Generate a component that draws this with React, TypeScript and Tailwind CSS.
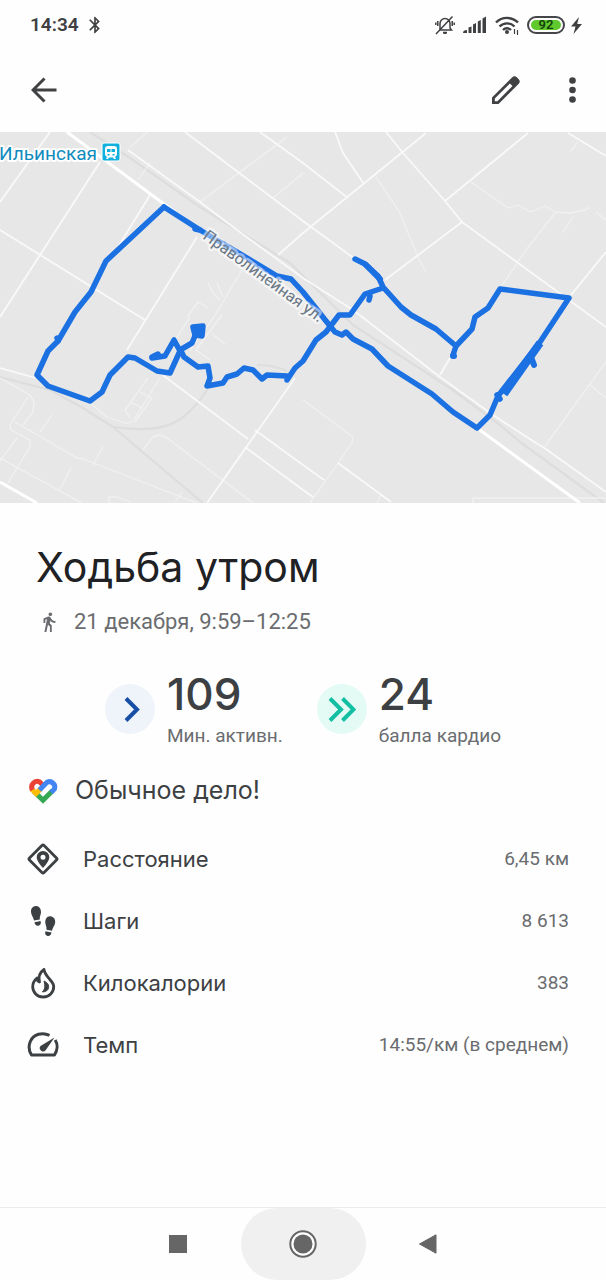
import type { ReactNode } from 'react';
import { MdDirectionsWalk, MdBluetooth } from 'react-icons/md';

const roads = [
  'M128 150 200 202 237 230 303 278 353 310 440 377 493 415 536 443 543 447 606 492',
  'M185 132 303 221 355 259',
  'M260 132 303 163 348 198',
  'M50 132 0 202',
  'M100 162 0 317',
  'M150 195 118 247',
  'M0 230 145 320',
  'M197 237 127 350',
  'M426 133 303 233 278 255',
  'M335 132 343 153 364 184',
  'M386 132 403 153 445 201 462 222 606 327',
  'M528 133 445 201',
  'M462 222 385 280',
  'M568 133 606 156',
  'M606 252 571 295',
  'M450 358 440 375',
  'M295 378 207 503',
  'M160 373 248 439',
  'M255 430 303 465 324 480',
  'M245 447 303 490 313 497',
  'M338 463 391 502',
  'M0 368 36 378',
];

const lanes = [
  'M150 130 130 147',
  'M287 137 200 202',
  'M303 173 273 198',
  'M150 163 138 180',
  'M242 270 214 317 190 350',
  'M217 283 223 297M208 283 213 293 220 300M187 317 198 302 208 308',
  'M376 177 400 213 418 257 426 272',
  'M471 182 508 208 518 205 531 212 545 206 555 212 570 213 585 210 590 207',
  'M555 213 526 250 501 287',
  'M573 217 562 233M578 142 571 151M596 212 606 220',
  'M606 362 545 446M590 385 606 398',
  'M303 400 353 437 352 443 310 503',
  'M381 495 377 503M473 503V498H606',
  'M143 450 152 438Q158 432 167 438L253 503',
  'M90 403 107 417 125 423Q131 424 135 418L160 378',
  'M0 378 30 395 34 402 33 412 23 425',
  'M28 397 10 425 11 430 30 440 30 447 8 483M17 438 0 461',
  'M15 422 77 458 83 459 197 503',
  'M0 458 82 503',
  'M52 415 40 432M103 447 93 465M71 468 59 491',
  'M109 503V497L117 497 130 502M182 492 175 502',
  'M148 378 125 410 130 418M140 392 152 398 135 422M130 402 143 408',
  'M190 317 172 345M222 315 196 350 210 360M212 334 225 344M182 358 196 368',
];

const rails = [
  'M90 132 130 158 200 207 290 263 353 325 453 390 500 425 520 442 604 503',
  'M0 377 50 390 83 408 113 427 203 503',
  'M113 427Q160 434 182 418 196 407 207 390',
  'M257 365Q275 365 287 371',
];

const route = [
  'M164 207 106 261 91 292 75 312 58 341 48 351 37 375 48 386 90 401 102 392 110 375 128 357 135 358 157 371 170 373 180 351 174 340 165 356 152 358',
  'M180 350 192 343 197 331M181 351 184 357 198 367 208 366 210 378 207 386 223 383 227 377 237 374 244 368 253 370 262 379 267 375 287 376 287 380 295 368 303 361 316 340 326 332 339 315 350 315 365 294 383 288',
  'M164 207 200 230 237 252 277 276 291 279 303 292 330 326 335 332 342 335 346 332 353 339 372 349 388 366 432 394 453 412 477 428 490 415 498 396 540 342 569 298 500 289 488 308 475 317 472 329 456 346 453 355',
  'M355 259 365 264 378 276 383 287 401 307 411 315 436 329 456 346',
  'M58 341 57 338M195 229 200 230M369 300 370 296M152 357 158 354M497 395 500 399',
];

function RouteMap() {
  return (
    <svg viewBox="0 132 606 371" className="block w-full bg-[#e7e7e7]" role="img" aria-label="Маршрут">
      <g fill="none" strokeLinejoin="round">
        <g stroke="#dcdddc" strokeWidth="2.2">
          {rails.map((d) => (
            <path key={d} d={d} />
          ))}
        </g>
        <g stroke="#f1f1f1" strokeWidth="1.3">
          {lanes.map((d) => (
            <path key={d} d={d} />
          ))}
        </g>
        <g stroke="#f9f9f9" strokeWidth="1.8">
          {roads.map((d) => (
            <path key={d} d={d} />
          ))}
        </g>
        <path d="M67 132 164 204 200 230M477 428 580 503M0 482 37 503" stroke="#fff" strokeWidth="3" />
        <g stroke="#1b70e2" strokeWidth="5.5" strokeLinecap="round">
          {route.map((d) => (
            <path key={d} d={d} />
          ))}
          <path d="M193 327 203 326 202 336 195 335Z" fill="#1b70e2" />
          <path d="M540 343 504 394" strokeWidth="8" strokeLinecap="butt" />
          <path d="M531 357 534 365M366 265 380 279M453 356 454 356" strokeWidth="6" />
        </g>
      </g>

      <g
        fontFamily="Roboto, sans-serif"
        stroke="#fff"
        strokeLinejoin="round"
        paintOrder="stroke"
      >
        <text x="-1" y="160" fontSize="19" strokeWidth="4" fill="#0e8bbd">
          Ильинская
        </text>
        <text
          transform="translate(202 238) rotate(36)"
          fontSize="16"
          strokeWidth="5"
          strokeOpacity="0.5"
          fill="#6b7785"
        >
          Праволинейная ул.
        </text>
      </g>

      <rect x="102" y="143" width="18" height="18" rx="2" fill="#12b0dc" stroke="#fff" />
      <path
        d="M108 146h6q3 0 3 3v5q0 2-2 3l1 2h-2l-1-1.500h-4l-1 1.500h-2l1-2q-2-1-2-3v-5q0-3 3-3z"
        fill="#fff"
      />
      <path d="M107 149h3.500v3h-3.500zM111.500 149h3.500v3h-3.500zM107.500 154h2v1.500h-2zM112.500 154h2v1.500h-2z" fill="#12b0dc" />
    </svg>
  );
}

function StatusBar() {
  return (
    <div className="flex h-12 items-center justify-between pt-0.5 pr-6 pl-[30px] text-[#3f4042]">
      <div className="flex items-center gap-1.5">
        <span className="text-[19px] leading-6 font-semibold">14:34</span>
        <MdBluetooth className="size-5" />
      </div>
      <div className="flex items-center gap-2">
        <svg width="20" height="20" viewBox="0 0 20 20" fill="none" stroke="currentColor" strokeWidth="1.500">
          <path d="M5 14.500V8.500a5 5 0 0 1 10 0v4.500l1.500 2H4M1 19 17.500 1.500M8 17.500h4M2.800 6v5M.8 7.500v2.500M17.200 6v5M19.200 7.500v2.500" />
          <path d="M8.500 18h3" strokeWidth="2" />
        </svg>
        <svg width="24" height="18" viewBox="0 0 24 18" fill="currentColor">
          <path d="M0 17q0-3 4-3v3zM5.500 11.500l3-1V17h-3zM10 8.500l3-1.500V17h-3zM14.800 5.500l3-1.500v13h-3zM19.500 2.500 23 .5V17h-3.500z" />
        </svg>
        <svg width="24" height="19" viewBox="0 0 24 19" fill="none" stroke="currentColor" strokeWidth="2.400">
          <path d="M1 6.500a15.500 15.500 0 0 1 22 0M4.500 10.500a10.500 10.500 0 0 1 15 0M8 14a5.500 5.500 0 0 1 8 0" />
          <circle cx="12" cy="16" r="2" fill="currentColor" stroke="none" />
          <path d="M19.500 13v5M22.500 14v5" strokeWidth="1.200" />
        </svg>
        <div className="flex items-center gap-1.5">
          <span className="flex h-[18px] w-[38px] rounded-full border-2 border-[#45464a] p-0.5">
            <span className="flex flex-1 items-center justify-center rounded-full bg-[#5fc92e] text-[13px] leading-3 font-semibold text-[#17400c]">
              92
            </span>
          </span>
          <svg width="11" height="17" viewBox="0 0 11 17" fill="currentColor">
            <path d="M8 0 0 9.500h4.500L2.500 17 11 7H6.200z" />
          </svg>
        </div>
      </div>
    </div>
  );
}

function TopBar() {
  return (
    <header className="flex h-[84px] items-center justify-between pr-6 pl-7 text-[#404143]">
      <button type="button" aria-label="Назад" className="flex size-8 items-center justify-center">
        <svg width="26" height="26" viewBox="0 0 26 26" fill="none" stroke="currentColor" strokeWidth="3">
          <path d="M13.500 1.500 2 13l11.500 11.500M2 13h23.500" />
        </svg>
      </button>
      <div className="flex items-center gap-10">
        <button type="button" aria-label="Изменить" className="flex size-8 items-center justify-center">
          <svg width="30" height="30" viewBox="0 0 30 30" fill="currentColor" fillRule="evenodd">
            <path d="M1 29v-6.500L21 2.500q2.500-2.500 5 0l1.500 1.500q2.500 2.500 0 5L7.500 29zM3.800 26.200h2.600L21.500 11l-2.600-2.600L3.800 23.600z" />
          </svg>
        </button>
        <button type="button" aria-label="Ещё" className="flex h-8 w-5 items-center justify-center">
          <svg width="7" height="26" viewBox="0 0 7 26" fill="currentColor">
            <circle cx="3.500" cy="3.500" r="3.300" />
            <circle cx="3.500" cy="13" r="3.300" />
            <circle cx="3.500" cy="22.500" r="3.300" />
          </svg>
        </button>
      </div>
    </header>
  );
}

interface StatProps {
  icon: ReactNode;
  value: string;
  label: string;
}

function Stat({ icon, value, label }: StatProps) {
  return (
    <div className="flex items-center gap-3">
      {icon}
      <div>
        <p className="font-[Inter,sans-serif] text-[44px] leading-[52px] font-medium text-[#3c4043]">{value}</p>
        <p className="mt-0.5 text-[19px] leading-7 text-[#6a6c6f]">{label}</p>
      </div>
    </div>
  );
}

function FitHeart() {
  return (
    <svg width="32" height="27" viewBox="0 0 32 27" fill="none" strokeWidth="5">
      <path d="M7 14.500 16 23.200 25.500 13.800" stroke="#34a853" />
      <path d="M4.200 11.800 9 16.500 14 11.500" stroke="#fbbc04" />
      <path d="M5.500 13A5.700 5.700 0 0 1 12.500 4.800L17.500 9.800" stroke="#ea4335" />
      <path d="M12.500 13 20 5.200A5.500 5.500 0 0 1 27.500 12L24 15.500" stroke="#4285f4" />
    </svg>
  );
}

function DistanceIcon() {
  return (
    <svg width="32" height="32" viewBox="0 0 32 32" fill="none">
      <rect x="5.700" y="5.700" width="20.600" height="20.600" rx="1.500" transform="rotate(45 16 16)" stroke="currentColor" strokeWidth="2.800" />
      <path
        fill="currentColor"
        fillRule="evenodd"
        d="M16 8a6.300 6.300 0 0 1 6.300 6.300c0 4.200-6.300 10.700-6.300 10.700s-6.300-6.500-6.300-10.700A6.300 6.300 0 0 1 16 8zm0 3.800a2.500 2.500 0 1 0 0 5 2.500 2.500 0 0 0 0-5z"
      />
    </svg>
  );
}

function StepsIcon() {
  return (
    <svg width="32" height="32" viewBox="0 0 32 32" fill="currentColor">
      <path d="M8.500 1c3.500-.5 5.800 3 5.500 6.500-.2 2.500-1.500 4-1.200 7L7 15.500C6.500 12 4.200 10.500 4 7 3.800 4 5.500 1.300 8.500 1zM7.500 17.300l6-1.200c1 2.400 0 4.300-2 4.600-2.200.4-3.700-1-4-3.400z" />
      <path d="M23.500 11.200c-3.500-.5-5.500 3-5.200 6.500.2 2.500 1.500 4 1.200 7l5.500 1c.5-3.500 3-5 3.200-8.500.2-3-1.700-5.700-4.700-6zM24.500 27.500l-6-1.200c-1 2.400 0 4.300 2 4.600 2.200.4 3.700-1 4-3.400z" />
    </svg>
  );
}

function FlameIcon() {
  return (
    <svg width="32" height="32" viewBox="0 0 32 32" fill="none" stroke="currentColor" strokeWidth="2.800" strokeLinejoin="round">
      <path d="M17 2.500c-5 3.500-5.800 7.500-4.500 12.500-1.800-.6-2.500-2-2.500-4-3 2.500-4.300 5.800-4.300 9A10.300 10.300 0 0 0 16.300 30a10.300 10.300 0 0 0 10.400-10.500c0-6-8.500-9-9.700-17z" />
      <path d="M17 14c4 2 5 4.200 4.500 6.800-.5 2.600-2.700 4.200-6.200 4 2.500-1.800 3.200-5.500 1.700-10.800z" fill="currentColor" strokeWidth="1" />
    </svg>
  );
}

function PaceIcon() {
  return (
    <svg width="32" height="32" viewBox="0 0 32 32" fill="none" stroke="currentColor" strokeWidth="3">
      <path d="M22.500 6.300C15.500 2.800 6.500 5 3.300 12.500c-1.800 4.300-1.300 9.500 1.200 13.500h23c3-4.500 3.500-10.500.7-15" strokeLinejoin="round" />
      <path d="M27.500 8.500 18.800 21a3.300 3.300 0 0 1-5.300-4z" fill="currentColor" stroke="none" />
    </svg>
  );
}

const metrics = [
  { label: 'Расстояние', value: '6,45 км', icon: <DistanceIcon /> },
  { label: 'Шаги', value: '8 613', icon: <StepsIcon /> },
  { label: 'Килокалории', value: '383', icon: <FlameIcon /> },
  { label: 'Темп', value: '14:55/км (в среднем)', icon: <PaceIcon /> },
];

function NavBar() {
  return (
    <nav className="mt-auto flex h-[73px] items-center justify-center border-t border-[#ebebeb] text-[#666]">
      <button type="button" aria-label="Недавние" className="flex h-full w-[125px] items-center justify-center">
        <span className="size-[18px] bg-[#666]" />
      </button>
      <button
        type="button"
        aria-label="Домой"
        className="flex h-full w-[125px] items-center justify-center rounded-full bg-[#f0f0f0]"
      >
        <svg width="28" height="28" viewBox="0 0 28 28">
          <circle cx="14" cy="14" r="12.700" fill="#fff" stroke="currentColor" strokeWidth="2" />
          <circle cx="14" cy="14" r="9.500" fill="currentColor" />
        </svg>
      </button>
      <button type="button" aria-label="Назад" className="flex h-full w-[125px] items-center justify-center">
        <svg width="18" height="20" viewBox="0 0 18 20" fill="currentColor" stroke="currentColor" strokeLinejoin="round">
          <path d="M.5 10 17 .8v18.400z" />
        </svg>
      </button>
    </nav>
  );
}

function App() {
  return (
    <div className="flex min-h-screen flex-col bg-[#fefefe] font-[Roboto,sans-serif]">
      <StatusBar />
      <TopBar />
      <RouteMap />

      <main className="pt-10">
        <h1 className="px-9 font-[Inter,sans-serif] text-[41px] leading-[48px] text-[#202124]">Ходьба утром</h1>
        <div className="mt-[17px] flex items-center gap-3.5 px-[38px] text-[#6a6c6f]">
          <MdDirectionsWalk className="size-[22px]" />
          <p className="text-[22px] leading-7">21 декабря, 9:59–12:25</p>
        </div>

        <div className="mt-8 flex justify-center gap-[34px]">
          <Stat
            value="109"
            label="Мин. активн."
            icon={
              <span className="flex size-[50px] items-center justify-center rounded-full bg-[#eff3fa] pl-1">
                <svg width="16" height="25" viewBox="0 0 16 25" fill="none" stroke="#174ea6" strokeWidth="4">
                  <path d="M2 1.500 13 12.500 2 23.500" />
                </svg>
              </span>
            }
          />
          <Stat
            value="24"
            label="балла кардио"
            icon={
              <span className="flex size-[50px] items-center justify-center rounded-full bg-[#e4fbf5]">
                <svg width="28" height="25" viewBox="0 0 28 25" fill="none" stroke="#12bfa2" strokeWidth="4">
                  <path d="M2 1.500 13 12.500 2 23.500M14.500 1.500l11 11-11 11" />
                </svg>
              </span>
            }
          />
        </div>

        <div className="mt-[26px] flex items-center gap-4 px-[27px]">
          <FitHeart />
          <p className="font-[Inter,sans-serif] text-[25px] leading-7 text-[#3c4043]">Обычное дело!</p>
        </div>

        <ul className="mt-6 pr-[37px] pl-[27px]">
          {metrics.map((metric) => (
            <li key={metric.label} className="flex h-[62px] items-center text-[#3c4043]">
              {metric.icon}
              <span className="ml-6 flex-1 font-[Inter,sans-serif] text-[22px] leading-7">{metric.label}</span>
              <span className="text-[19px] leading-7 text-[#6a6c6f]">{metric.value}</span>
            </li>
          ))}
        </ul>
      </main>

      <NavBar />
    </div>
  );
}

export default App;
